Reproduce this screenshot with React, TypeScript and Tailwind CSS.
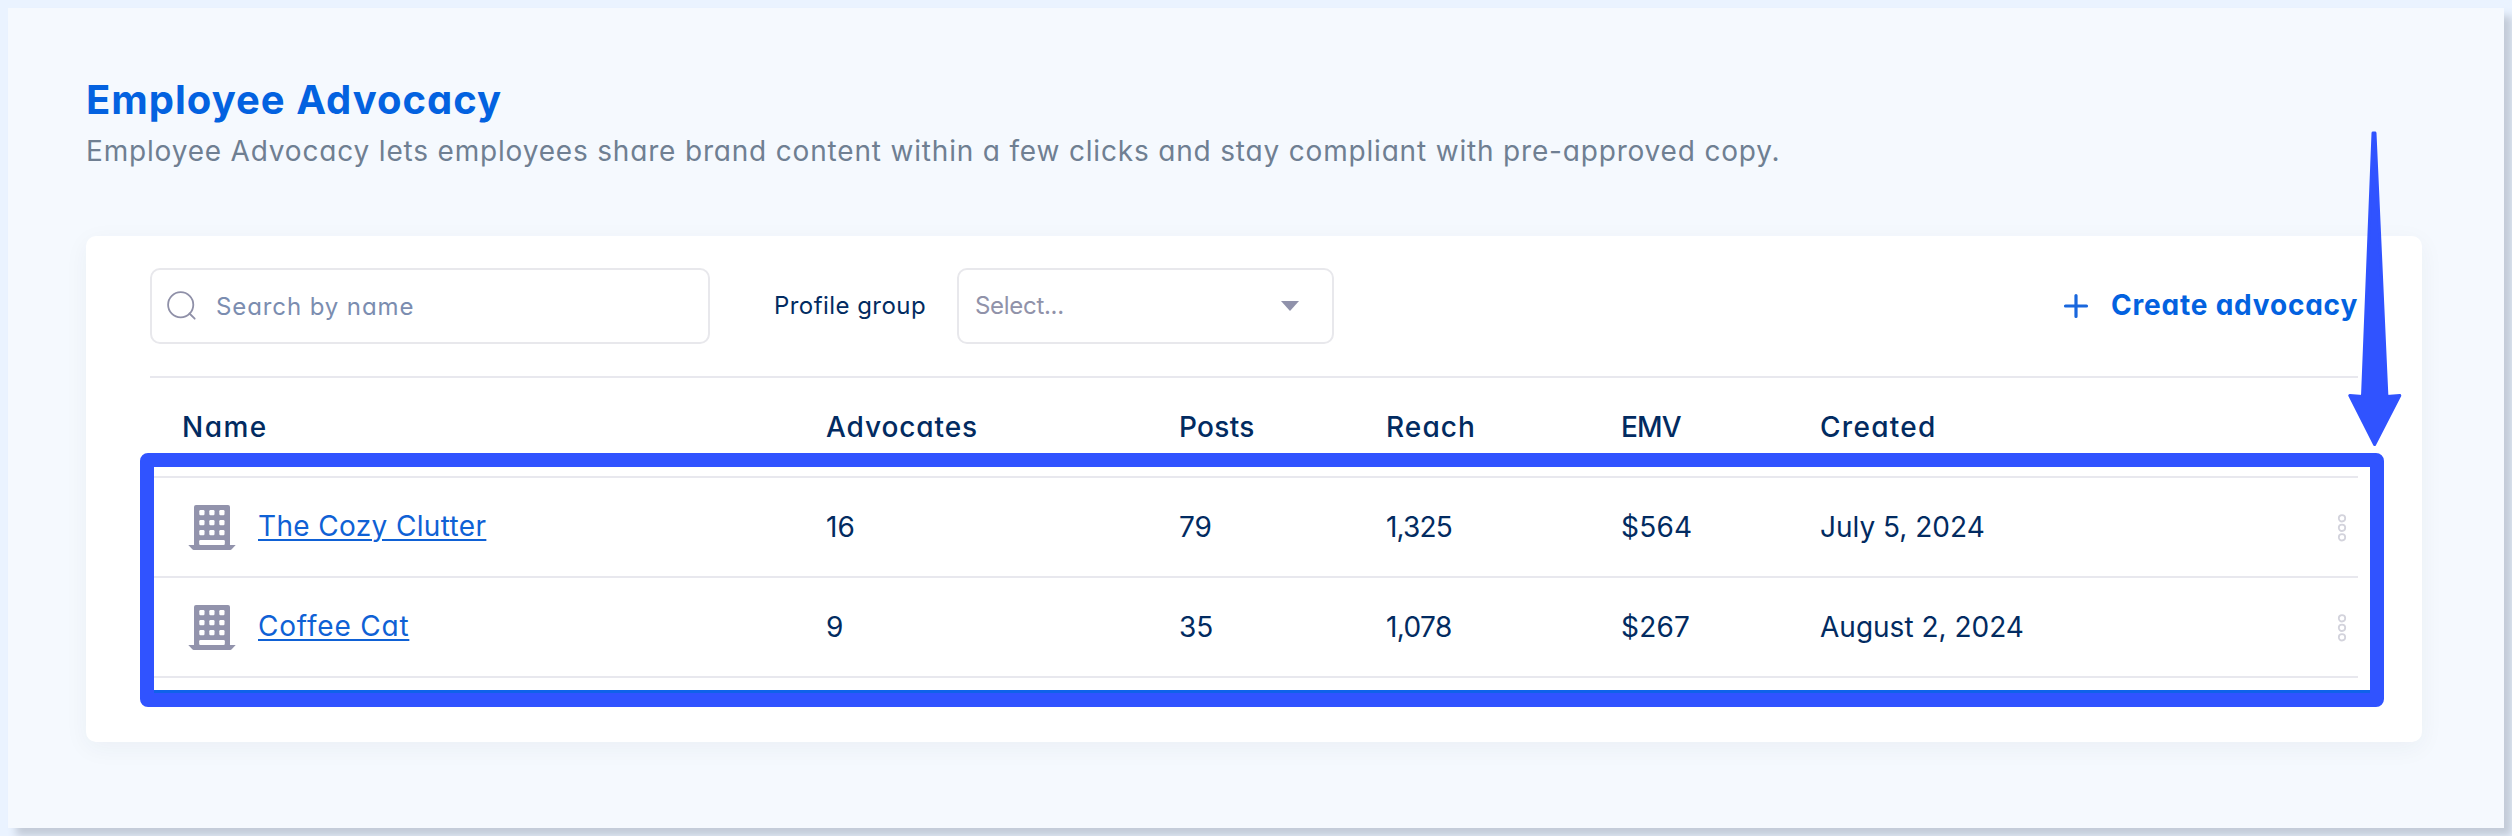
import { ReactNode } from "react";
import clsx from "clsx";

interface Advocacy {
  name: string;
  nameClass: string;
  advocates: string;
  posts: string;
  reach: string;
  reachClass: string;
  emv: string;
  created: string;
}

const advocacies: Advocacy[] = [
  {
    name: "The Cozy Clutter",
    nameClass: "tracking-[0.35px]",
    advocates: "16",
    posts: "79",
    reach: "1,325",
    reachClass: "tracking-[-0.8px]",
    emv: "$564",
    created: "July 5, 2024",
  },
  {
    name: "Coffee Cat",
    nameClass: "tracking-[0.8px]",
    advocates: "9",
    posts: "35",
    reach: "1,078",
    reachClass: "tracking-[-0.6px]",
    emv: "$267",
    created: "August 2, 2024",
  },
];

const columns = [
  { label: "Name", className: "pl-[32px] tracking-[1.5px]" },
  { label: "Advocates", className: "tracking-[0.9px]" },
  { label: "Posts", className: "tracking-[0.3px]" },
  { label: "Reach", className: "tracking-[1.1px]" },
  { label: "EMV", className: "tracking-[-0.8px]" },
  { label: "Created", className: "tracking-[1.3px]" },
];

function BuildingIcon() {
  return (
    <svg width="48" height="46" viewBox="0 0 48 46" className="shrink-0">
      <path
        fill="#9293ac"
        d="M8 1h32a2 2 0 0 1 2 2v38h5.7l-4 4.3a2 2 0 0 1-1.4.7H5.7a2 2 0 0 1-1.4-.7L.3 41H6V3a2 2 0 0 1 2-2Z"
      />
      {[6, 16, 26].map(y =>
        [11.3, 21.3, 31.3].map(x => <rect key={`${x}-${y}`} x={x} y={y} width="5.2" height="5.2" rx="1.2" fill="#fff" />)
      )}
      <rect x="11.2" y="36" width="25.6" height="5" rx="1.2" fill="#fff" />
    </svg>
  );
}

function MenuDots() {
  return (
    <svg width="10" height="30" viewBox="0 0 10 30" fill="none" stroke="#d3d3dc" strokeWidth="1.8">
      <circle cx="5" cy="6.3" r="3.2" />
      <circle cx="5" cy="15.8" r="3.2" />
      <circle cx="5" cy="25.3" r="3.2" />
    </svg>
  );
}

function Row({ children, className }: { children: ReactNode; className?: string }) {
  return (
    <div
      className={clsx(
        "grid grid-cols-[676px_353px_207px_235px_199px_1fr_21px] items-center h-[100px] border-b-2 border-[#e8e8ee] whitespace-nowrap",
        className
      )}
    >
      {children}
    </div>
  );
}

export default function App() {
  return (
    <div className="relative w-[2512px] h-[836px] overflow-hidden bg-[#eaf3ff] p-2 font-['Inter',sans-serif] text-[28px] leading-[36px] text-[#022b61] [font-feature-settings:'cv11']">
      <div className="h-[820px] bg-[#f5f9fe] pl-[78px] pr-[82px] pt-[67px] shadow-[8px_8px_8px_#c3cbd8]">
        <h1 className="h-[50px] text-[40px] leading-[50px] font-bold text-[#0362e0] tracking-[1px]">Employee Advocacy</h1>
        <p className="mt-2 text-[#6f7f92] tracking-[0.82px] whitespace-nowrap">
          Employee Advocacy lets employees share brand content within a few clicks and stay compliant with pre-approved copy.
        </p>

        <div className="mt-[67px] h-[506px] rounded-[10px] bg-white px-16 pt-8 shadow-[0_6px_24px_rgba(40,60,80,0.05)]">
          <div className="flex items-center h-[76px] text-2xl">
            <div className="flex items-center w-[560px] h-[76px] rounded-[10px] border-2 border-[#e8e8ec] pl-[15px]">
              <svg width="30" height="30" viewBox="0 0 30 30" fill="none" stroke="#8f90a8" strokeWidth="1.8">
                <circle cx="13.7" cy="13.7" r="12.6" />
                <path d="m22.5 22.5 5.2 5.2" strokeLinecap="round" />
              </svg>
              <span className="ml-[19px] pt-px text-[#7b8db0] tracking-[0.9px]">Search by name</span>
            </div>
            <span className="ml-[64px] w-[183px] tracking-[0.45px]">Profile group</span>
            <div className="flex items-center justify-between w-[377px] h-[76px] rounded-[10px] border-2 border-[#e8e8ec] pl-4 pr-[33px] text-[#9092a9]">
              <span className="tracking-[-0.3px]">Select...</span>
              <svg width="18" height="10" viewBox="0 0 18 10" fill="#9092ab">
                <path d="M0 0h18L9 10Z" />
              </svg>
            </div>
            <div className="ml-auto flex items-center text-[28px] font-bold text-[#0362e0]">
              <svg width="26" height="26" viewBox="0 0 26 26" stroke="#1967dd" strokeWidth="3.2" strokeLinecap="round">
                <path d="M13 2.5v21M2.5 13h21" />
              </svg>
              <span className="ml-[22px] w-[247px] whitespace-nowrap tracking-[0.8px]">Create advocacy</span>
            </div>
          </div>

          <Row className="mt-8 border-t-2 !h-[102px] font-medium">
            {columns.map(col => (
              <span key={col.label} className={col.className}>{col.label}</span>
            ))}
          </Row>

          {advocacies.map(item => (
            <Row key={item.name}>
              <div className="flex items-center pl-[38px]">
                <BuildingIcon />
                <a className={clsx("ml-[22px] pb-[3px] text-[#0f61d5] underline underline-offset-[3px] decoration-2", item.nameClass)}>
                  {item.name}
                </a>
              </div>
              <span>{item.advocates}</span>
              <span>{item.posts}</span>
              <span className={item.reachClass}>{item.reach}</span>
              <span className="tracking-[0.2px]">{item.emv}</span>
              <span>{item.created}</span>
              <MenuDots />
            </Row>
          ))}
        </div>
      </div>

      {/* Highlight frame over the rows */}
      <div className="absolute left-[140px] top-[453px] w-[2244px] h-[254px] rounded-[8px] border-[14px] border-b-[17px] border-[#3053ff]">
        <div className="absolute inset-x-0 -bottom-[3px] h-[3px] bg-[#0f62ea]" />
      </div>

      <svg className="absolute left-[2344px] top-[128px]" width="62" height="322" viewBox="0 0 62 322">
        <path
          d="M29 5h2L42.9 268.5 55.8 267.5 30.6 316.5 5.8 267.5 18.5 268.5Z"
          fill="#3053ff"
          stroke="#3053ff"
          strokeWidth="3"
          strokeLinejoin="round"
        />
      </svg>
    </div>
  );
}
